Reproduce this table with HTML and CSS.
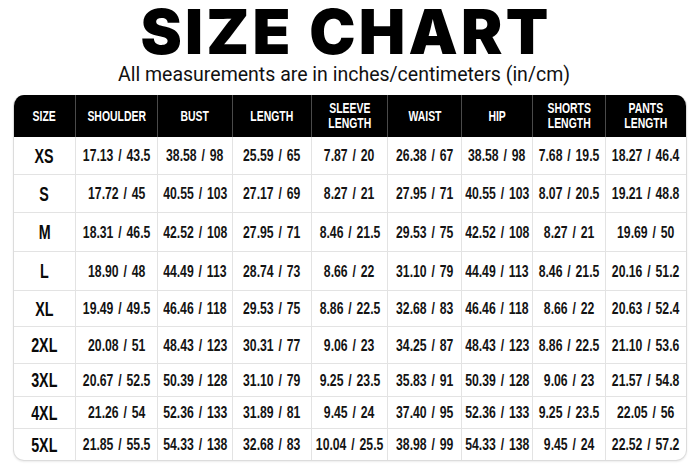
FILE: index.html
```html
<!DOCTYPE html>
<html lang="en">
<head>
<meta charset="utf-8">
<title>Size Chart</title>
<link rel="stylesheet" href="styles.css">
</head>
<body>
<main class="page">
  <h1 class="title">SIZE CHART</h1>
  <p class="subtitle">All measurements are in inches/centimeters (in/cm)</p>
  <div class="chart">
    <div class="cell head"><span>SIZE</span></div>
    <div class="cell head"><span>SHOULDER</span></div>
    <div class="cell head"><span>BUST</span></div>
    <div class="cell head"><span>LENGTH</span></div>
    <div class="cell head"><span>SLEEVE<br>LENGTH</span></div>
    <div class="cell head"><span>WAIST</span></div>
    <div class="cell head"><span>HIP</span></div>
    <div class="cell head"><span>SHORTS<br>LENGTH</span></div>
    <div class="cell head"><span>PANTS<br>LENGTH</span></div>

    <div class="cell size"><span>XS</span></div><div class="cell"><span>17.13 / 43.5</span></div><div class="cell"><span>38.58 / 98</span></div><div class="cell"><span>25.59 / 65</span></div><div class="cell"><span>7.87 / 20</span></div><div class="cell"><span>26.38 / 67</span></div><div class="cell"><span>38.58 / 98</span></div><div class="cell"><span>7.68 / 19.5</span></div><div class="cell"><span>18.27 / 46.4</span></div>
    <div class="cell size"><span>S</span></div><div class="cell"><span>17.72 / 45</span></div><div class="cell"><span>40.55 / 103</span></div><div class="cell"><span>27.17 / 69</span></div><div class="cell"><span>8.27 / 21</span></div><div class="cell"><span>27.95 / 71</span></div><div class="cell"><span>40.55 / 103</span></div><div class="cell"><span>8.07 / 20.5</span></div><div class="cell"><span>19.21 / 48.8</span></div>
    <div class="cell size"><span>M</span></div><div class="cell"><span>18.31 / 46.5</span></div><div class="cell"><span>42.52 / 108</span></div><div class="cell"><span>27.95 / 71</span></div><div class="cell"><span>8.46 / 21.5</span></div><div class="cell"><span>29.53 / 75</span></div><div class="cell"><span>42.52 / 108</span></div><div class="cell"><span>8.27 / 21</span></div><div class="cell"><span>19.69 / 50</span></div>
    <div class="cell size"><span>L</span></div><div class="cell"><span>18.90 / 48</span></div><div class="cell"><span>44.49 / 113</span></div><div class="cell"><span>28.74 / 73</span></div><div class="cell"><span>8.66 / 22</span></div><div class="cell"><span>31.10 / 79</span></div><div class="cell"><span>44.49 / 113</span></div><div class="cell"><span>8.46 / 21.5</span></div><div class="cell"><span>20.16 / 51.2</span></div>
    <div class="cell size"><span>XL</span></div><div class="cell"><span>19.49 / 49.5</span></div><div class="cell"><span>46.46 / 118</span></div><div class="cell"><span>29.53 / 75</span></div><div class="cell"><span>8.86 / 22.5</span></div><div class="cell"><span>32.68 / 83</span></div><div class="cell"><span>46.46 / 118</span></div><div class="cell"><span>8.66 / 22</span></div><div class="cell"><span>20.63 / 52.4</span></div>
    <div class="cell size"><span>2XL</span></div><div class="cell"><span>20.08 / 51</span></div><div class="cell"><span>48.43 / 123</span></div><div class="cell"><span>30.31 / 77</span></div><div class="cell"><span>9.06 / 23</span></div><div class="cell"><span>34.25 / 87</span></div><div class="cell"><span>48.43 / 123</span></div><div class="cell"><span>8.86 / 22.5</span></div><div class="cell"><span>21.10 / 53.6</span></div>
    <div class="cell size"><span>3XL</span></div><div class="cell"><span>20.67 / 52.5</span></div><div class="cell"><span>50.39 / 128</span></div><div class="cell"><span>31.10 / 79</span></div><div class="cell"><span>9.25 / 23.5</span></div><div class="cell"><span>35.83 / 91</span></div><div class="cell"><span>50.39 / 128</span></div><div class="cell"><span>9.06 / 23</span></div><div class="cell"><span>21.57 / 54.8</span></div>
    <div class="cell size"><span>4XL</span></div><div class="cell"><span>21.26 / 54</span></div><div class="cell"><span>52.36 / 133</span></div><div class="cell"><span>31.89 / 81</span></div><div class="cell"><span>9.45 / 24</span></div><div class="cell"><span>37.40 / 95</span></div><div class="cell"><span>52.36 / 133</span></div><div class="cell"><span>9.25 / 23.5</span></div><div class="cell"><span>22.05 / 56</span></div>
    <div class="cell size"><span>5XL</span></div><div class="cell"><span>21.85 / 55.5</span></div><div class="cell"><span>54.33 / 138</span></div><div class="cell"><span>32.68 / 83</span></div><div class="cell"><span>10.04 / 25.5</span></div><div class="cell"><span>38.98 / 99</span></div><div class="cell"><span>54.33 / 138</span></div><div class="cell"><span>9.45 / 24</span></div><div class="cell"><span>22.52 / 57.2</span></div>
  </div>
</main>
</body>
</html>
```

FILE: styles.css
```css
* { box-sizing: border-box; }
html, body { margin: 0; padding: 0; background: #ffffff; }
.page {
  width: 700px;
  height: 467px;
  padding-top: 1px;
  display: flex;
  flex-direction: column;
  align-items: center;
  color: #0d0d0d;
}
.title {
  margin: 0 8px 0 0;
  font-family: Inter, "Liberation Sans", sans-serif;
  font-weight: 900;
  font-size: 62px;
  line-height: 62px;
  letter-spacing: 3.2px;
  color: #000;
}
.subtitle {
  margin: 2px 12px 0 0;
  font-family: Roboto, "Liberation Sans", sans-serif;
  font-size: 19.5px;
  line-height: 20px;
  color: #111;
}
.chart {
  margin-top: 10px;
  display: grid;
  grid-template-columns: 62px 82px 75px 79px 76px 74px 71px 73px 80px;
  grid-template-rows: 42px 38px 38px 39px 39px 36px 37px 33px 32px 31px;
  border: 1px solid #dcdcdc;
  border-top: 0;
  border-radius: 11px;
  overflow: hidden;
  box-shadow: 0 1px 2px rgba(0,0,0,0.08);
  font-family: "Liberation Sans", Arial, sans-serif;
}
.cell {
  display: flex;
  align-items: center;
  justify-content: center;
  text-align: center;
  font-size: 16.5px;
  font-weight: 700;
  word-spacing: 2px;
  color: #141414;
  border-right: 1px solid #e3e3e3;
  border-bottom: 1px solid #e3e3e3;
  white-space: nowrap;
}
.cell span {
  display: inline-block;
  transform: scaleX(0.74);
}
.cell:nth-child(9n) { border-right: 0; }
.cell:nth-last-child(-n+9) { border-bottom: 0; }
.head {
  background: #000;
  color: #fff;
  font-size: 14.5px;
  line-height: 15px;
  word-spacing: 0;
  border-right-color: #4a4a4a;
  border-bottom: 0;
}
.head span { transform: scaleX(0.72); }
.size {
  font-size: 21px;
  color: #0a0a0a;
}
.size span { transform: scaleX(0.68); }
```
